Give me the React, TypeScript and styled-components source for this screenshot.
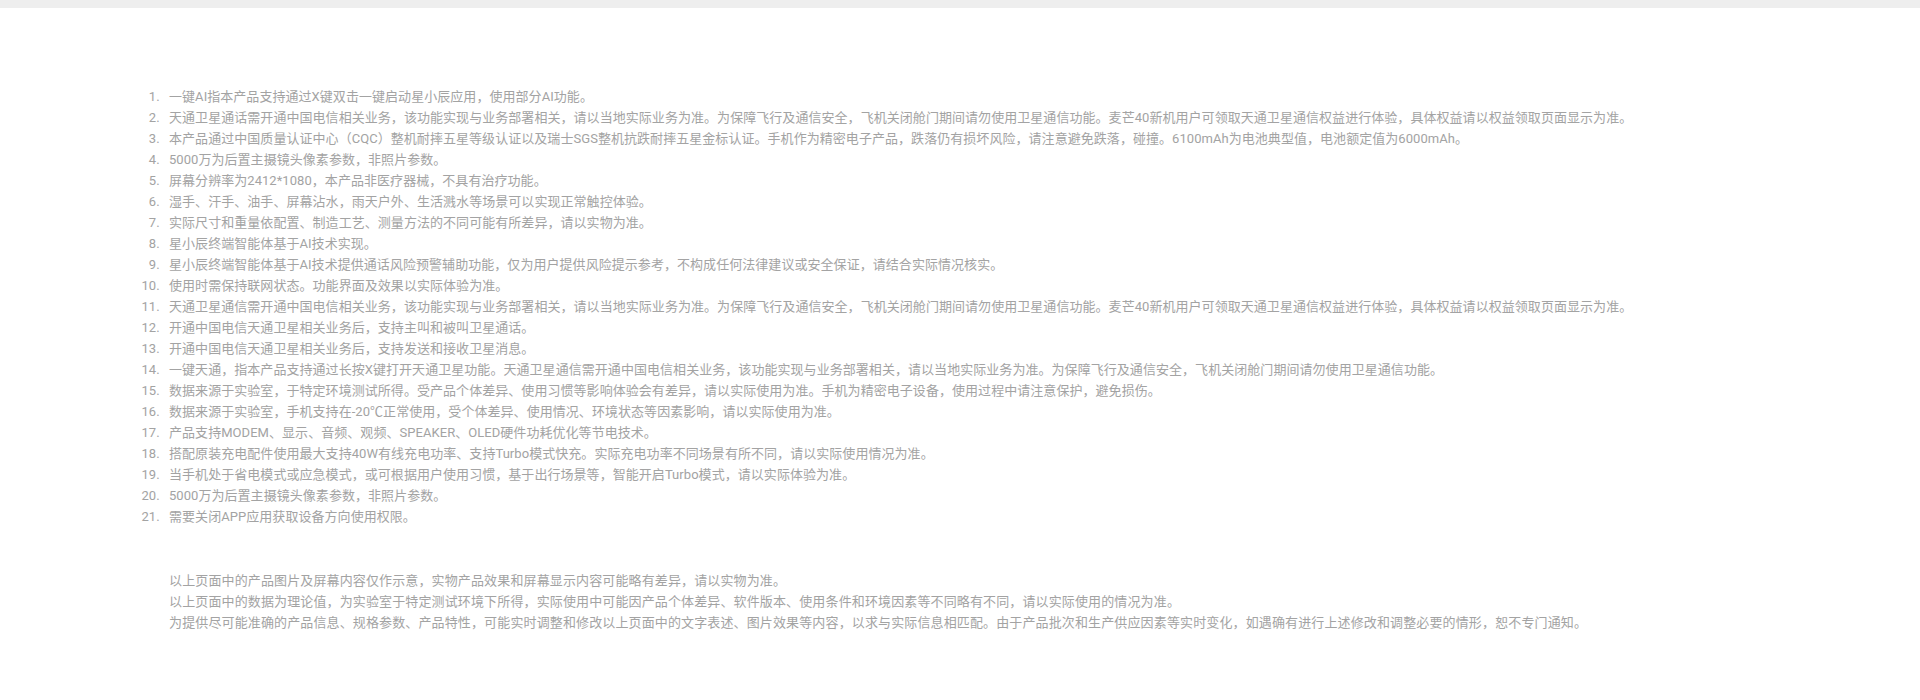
import styled, { createGlobalStyle } from 'styled-components';

const GlobalStyle = createGlobalStyle`
  html, body {
    margin: 0;
    padding: 0;
    background: #ffffff;
  }
  body {
    font-family: "Roboto", "Noto Sans CJK SC", sans-serif;
  }
`;

const TopBar = styled.div`
  height: 8px;
  background-color: #eeeeee;
`;

const Footnotes = styled.section`
  padding: 78px 0 0 169px;
  color: #a3a3a3;
  font-size: 13px;
  line-height: 21px;
`;

const NoteList = styled.ol`
  margin: 0 0 43px;
  padding: 0;
  letter-spacing: 0.05px;
`;

const NoteItem = styled.li`
  white-space: nowrap;

  &::marker {
    content: counter(list-item) ".\\2002\\2009";
  }
`;

const Disclaimer = styled.p`
  margin: 0;
  white-space: nowrap;
  letter-spacing: 0.13px;
`;

const notes = [
  '一键AI指本产品支持通过X键双击一键启动星小辰应用，使用部分AI功能。',
  '天通卫星通话需开通中国电信相关业务，该功能实现与业务部署相关，请以当地实际业务为准。为保障飞行及通信安全，飞机关闭舱门期间请勿使用卫星通信功能。麦芒40新机用户可领取天通卫星通信权益进行体验，具体权益请以权益领取页面显示为准。',
  '本产品通过中国质量认证中心（CQC）整机耐摔五星等级认证以及瑞士SGS整机抗跌耐摔五星金标认证。手机作为精密电子产品，跌落仍有损坏风险，请注意避免跌落，碰撞。6100mAh为电池典型值，电池额定值为6000mAh。',
  '5000万为后置主摄镜头像素参数，非照片参数。',
  '屏幕分辨率为2412*1080，本产品非医疗器械，不具有治疗功能。',
  '湿手、汗手、油手、屏幕沾水，雨天户外、生活溅水等场景可以实现正常触控体验。',
  '实际尺寸和重量依配置、制造工艺、测量方法的不同可能有所差异，请以实物为准。',
  '星小辰终端智能体基于AI技术实现。',
  '星小辰终端智能体基于AI技术提供通话风险预警辅助功能，仅为用户提供风险提示参考，不构成任何法律建议或安全保证，请结合实际情况核实。',
  '使用时需保持联网状态。功能界面及效果以实际体验为准。',
  '天通卫星通信需开通中国电信相关业务，该功能实现与业务部署相关，请以当地实际业务为准。为保障飞行及通信安全，飞机关闭舱门期间请勿使用卫星通信功能。麦芒40新机用户可领取天通卫星通信权益进行体验，具体权益请以权益领取页面显示为准。',
  '开通中国电信天通卫星相关业务后，支持主叫和被叫卫星通话。',
  '开通中国电信天通卫星相关业务后，支持发送和接收卫星消息。',
  '一键天通，指本产品支持通过长按X键打开天通卫星功能。天通卫星通信需开通中国电信相关业务，该功能实现与业务部署相关，请以当地实际业务为准。为保障飞行及通信安全，飞机关闭舱门期间请勿使用卫星通信功能。',
  '数据来源于实验室，于特定环境测试所得。受产品个体差异、使用习惯等影响体验会有差异，请以实际使用为准。手机为精密电子设备，使用过程中请注意保护，避免损伤。',
  '数据来源于实验室，手机支持在-20℃正常使用，受个体差异、使用情况、环境状态等因素影响，请以实际使用为准。',
  '产品支持MODEM、显示、音频、观频、SPEAKER、OLED硬件功耗优化等节电技术。',
  '搭配原装充电配件使用最大支持40W有线充电功率、支持Turbo模式快充。实际充电功率不同场景有所不同，请以实际使用情况为准。',
  '当手机处于省电模式或应急模式，或可根据用户使用习惯，基于出行场景等，智能开启Turbo模式，请以实际体验为准。',
  '5000万为后置主摄镜头像素参数，非照片参数。',
  '需要关闭APP应用获取设备方向使用权限。',
];

const disclaimers = [
  '以上页面中的产品图片及屏幕内容仅作示意，实物产品效果和屏幕显示内容可能略有差异，请以实物为准。',
  '以上页面中的数据为理论值，为实验室于特定测试环境下所得，实际使用中可能因产品个体差异、软件版本、使用条件和环境因素等不同略有不同，请以实际使用的情况为准。',
  '为提供尽可能准确的产品信息、规格参数、产品特性，可能实时调整和修改以上页面中的文字表述、图片效果等内容，以求与实际信息相匹配。由于产品批次和生产供应因素等实时变化，如遇确有进行上述修改和调整必要的情形，恕不专门通知。',
];

export default function App() {
  return (
    <>
      <GlobalStyle />
      <TopBar />
      <Footnotes>
        <NoteList>
          {notes.map((note, i) => (
            <NoteItem key={i}>{note}</NoteItem>
          ))}
        </NoteList>
        {disclaimers.map((line, i) => (
          <Disclaimer key={i}>{line}</Disclaimer>
        ))}
      </Footnotes>
    </>
  );
}
